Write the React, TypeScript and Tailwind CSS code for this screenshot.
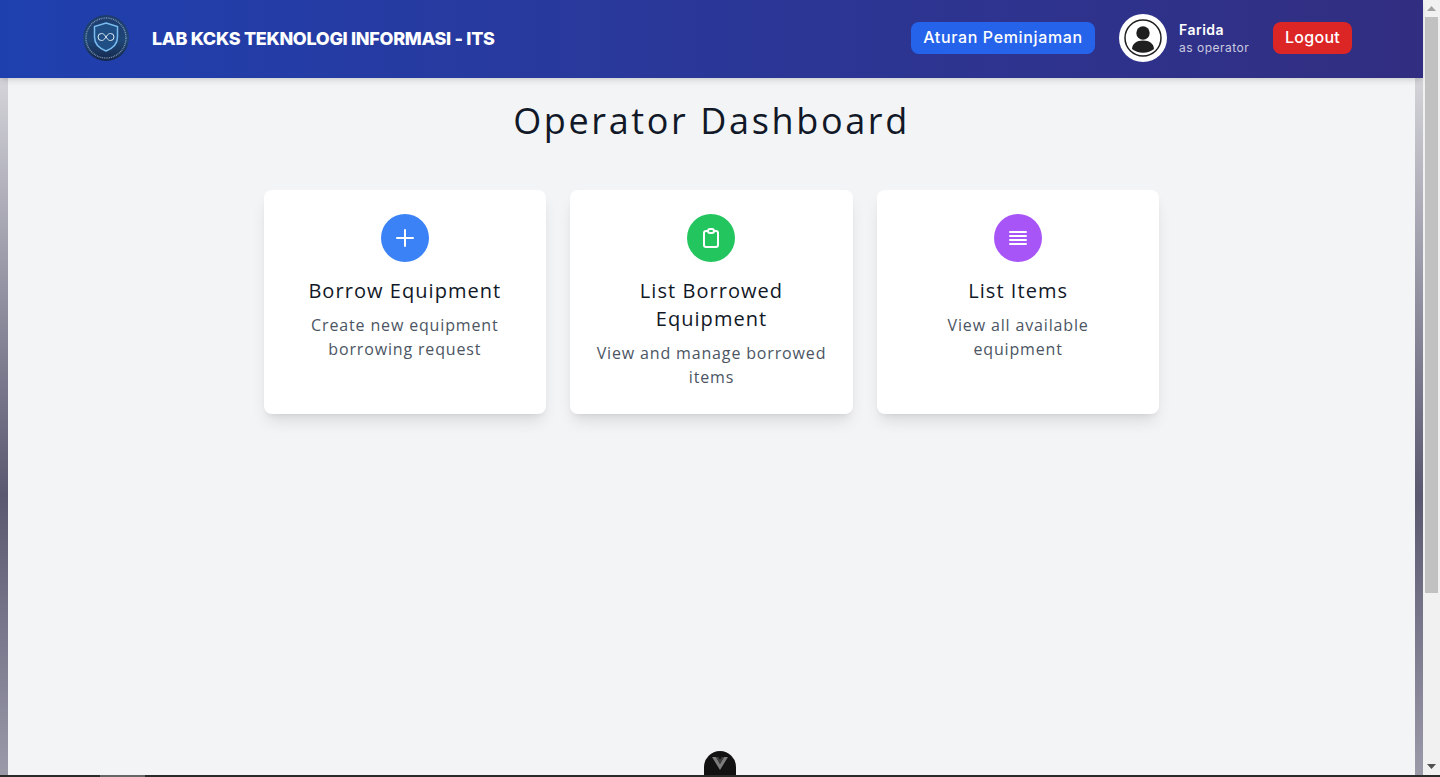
import React from 'react';

const cards = [
  {
    title: 'Borrow Equipment',
    desc: 'Create new equipment borrowing request',
    bg: 'bg-[#3b82f6]',
    path: 'M12 4v16m8-8H4',
  },
  {
    title: 'List Borrowed Equipment',
    desc: 'View and manage borrowed items',
    bg: 'bg-[#22c55e]',
    path: 'M9 5H7a2 2 0 00-2 2v12a2 2 0 002 2h10a2 2 0 002-2V7a2 2 0 00-2-2h-2M9 5a2 2 0 002 2h2a2 2 0 002-2M9 5a2 2 0 012-2h2a2 2 0 012 2',
  },
  {
    title: 'List Items',
    desc: 'View all available equipment',
    bg: 'bg-[#a855f7]',
    path: 'M4 6h16M4 10h16M4 14h16M4 18h16',
  },
];

function Logo() {
  return (
    <svg width="46" height="46" viewBox="0 0 46 46" className="shrink-0">
      <defs>
        <linearGradient id="logoFill" x1="0" y1="0" x2="0" y2="1">
          <stop offset="0" stopColor="#1d3c6e" />
          <stop offset="0.55" stopColor="#1e4676" />
          <stop offset="1" stopColor="#15264a" />
        </linearGradient>
      </defs>
      <circle cx="23" cy="23" r="23" fill="url(#logoFill)" />
      <circle cx="23" cy="23" r="20" fill="none" stroke="#b5cde0" strokeWidth="1.4" strokeDasharray="1 0.8" opacity="0.6" />
      <path d="M23 8l11.500 3.500v10.500c0 7-5 11.500-11.500 14-6.500-2.500-11.500-7-11.500-14v-10.500z" fill="#1f4f85" stroke="#7abcf0" strokeWidth="1.500" />
      <path d="M23 22c-1.800-2.900-3.100-3.500-4.500-3.500a3.500 3.500 0 000 7c1.400 0 2.700-.600 4.500-3.500zm0 0c1.800-2.900 3.100-3.500 4.500-3.500a3.500 3.500 0 010 7c-1.400 0-2.700-.600-4.500-3.500z" fill="none" stroke="#e2eef8" strokeWidth="1" />
    </svg>
  );
}

function Avatar() {
  return (
    <svg width="48" height="48" viewBox="0 0 48 48" className="shrink-0">
      <circle cx="24" cy="24" r="24" fill="#fff" />
      <circle cx="24" cy="24" r="18" fill="none" stroke="#1f1f1f" strokeWidth="1.5" />
      <circle cx="24" cy="19" r="6.700" fill="#1f1f1f" />
      <path d="M13 35c.4-5.500 4.400-8.500 11-8.500s10.600 3 11 8.500c-2.800 2.300-6.700 3.700-11 3.700s-8.200-1.400-11-3.700z" fill="#1f1f1f" />
    </svg>
  );
}

function Card({ title, desc, bg, path }: (typeof cards)[number]) {
  return (
    <div className="bg-white rounded-lg shadow-lg p-6 flex flex-col items-center text-center">
      <div className={`${bg} w-12 h-12 rounded-full flex items-center justify-center mb-4`}>
        <svg width="24" height="24" viewBox="0 0 24 24" fill="none" stroke="#fff" strokeWidth="2" strokeLinecap="round" strokeLinejoin="round">
          <path d={path} />
        </svg>
      </div>
      <h2 className="-translate-y-px text-[20px] leading-7 font-medium text-[#111827] mb-2 tracking-[1.05px] font-['Open_Sans',sans-serif]">{title}</h2>
      <p className="-translate-y-px max-w-[232px] text-base leading-6 font-normal text-[#4b5563] tracking-[0.85px] font-['Open_Sans',sans-serif]">{desc}</p>
    </div>
  );
}

export default function App() {
  return (
    <div className="relative h-[777px] w-full overflow-hidden flex flex-col bg-[#f3f4f6]">
      <div className="flex flex-1 min-h-0">
        <div className="flex flex-col flex-1 min-w-0">
          {/* Navbar */}
          <header className="relative z-10 h-[78px] shrink-0 bg-gradient-to-r from-[#1e40af] to-[#312e81] shadow-md flex items-center pb-[2px] pl-[83px] pr-[71px] text-white font-['Inter',sans-serif]">
            <Logo />
            <span className="ml-[23px] text-[18px] font-extrabold tracking-[-0.32px] whitespace-nowrap">LAB KCKS TEKNOLOGI INFORMASI - ITS</span>
            <div className="ml-auto flex items-center">
              <button className="h-8 w-[184px] pb-[2px] rounded-lg bg-[#2563eb] text-base font-medium tracking-[0.65px] whitespace-nowrap">Aturan Peminjaman</button>
              <div className="ml-6">
                <Avatar />
              </div>
              <div className="ml-3 w-[94px] flex flex-col">
                <span className="text-sm leading-5 font-semibold tracking-[0.5px]">Farida</span>
                <span className="text-xs leading-4 text-white/75 tracking-[0.5px]">as operator</span>
              </div>
              <button className="h-8 w-[79px] pb-[2px] rounded-lg bg-[#dc2626] text-base font-medium tracking-[0.3px]">Logout</button>
            </div>
          </header>

          <div className="flex flex-1 min-h-0">
            <div className="w-2 shrink-0 bg-gradient-to-b from-[#d4d4d9] via-[#5a5870] via-60% to-[#9b9aa9]" />
            <main className="flex-1 min-w-0 pt-6 flex flex-col items-center">
              <h1 className="-translate-y-px text-4xl leading-10 font-medium text-[#111827] mb-12 tracking-[2.63px] font-['Open_Sans',sans-serif]">Operator Dashboard</h1>
              <div className="grid grid-cols-3 gap-6 w-[896px]">
                {cards.map((c) => (
                  <Card key={c.title} {...c} />
                ))}
              </div>
            </main>
            <div className="w-2 shrink-0 bg-gradient-to-b from-[#d4d4d9] via-[#5a5870] via-60% to-[#9b9aa9]" />
          </div>
        </div>

        {/* Browser scrollbar */}
        <div className="w-[17px] shrink-0 bg-[#f1f1f1] flex flex-col items-center">
          <div className="h-[17px] shrink-0 flex items-center justify-center">
            <svg width="9" height="5" viewBox="0 0 9 5"><path d="M4.500 0L9 5H0z" fill="#a3a3a3" /></svg>
          </div>
          <div className="h-[576px] w-[13px] bg-[#c1c1c1]" />
          <div className="mt-auto h-[17px] shrink-0 flex items-center justify-center">
            <svg width="9" height="5" viewBox="0 0 9 5"><path d="M0 0h9L4.500 5z" fill="#505050" /></svg>
          </div>
        </div>
      </div>

      {/* Bottom edge of the window */}
      <div className="h-[2px] shrink-0 bg-[#2b2b2b] flex pl-[100px]">
        <div className="w-[45px] bg-[#666666]" />
      </div>

      {/* Vue devtools toggle */}
      <div className="absolute left-[704px] top-[751px] w-8 h-6 rounded-t-full bg-[#121212] flex items-center justify-center">
        <svg width="16" height="13" viewBox="0 0 16 13">
          <path d="M0 0h4l4 7 4-7h4L8 13z" fill="#7d7d7d" />
          <path d="M4 0h2.400L8 3l1.600-3H12L8 7z" fill="#3f3f3f" />
        </svg>
      </div>
    </div>
  );
}
